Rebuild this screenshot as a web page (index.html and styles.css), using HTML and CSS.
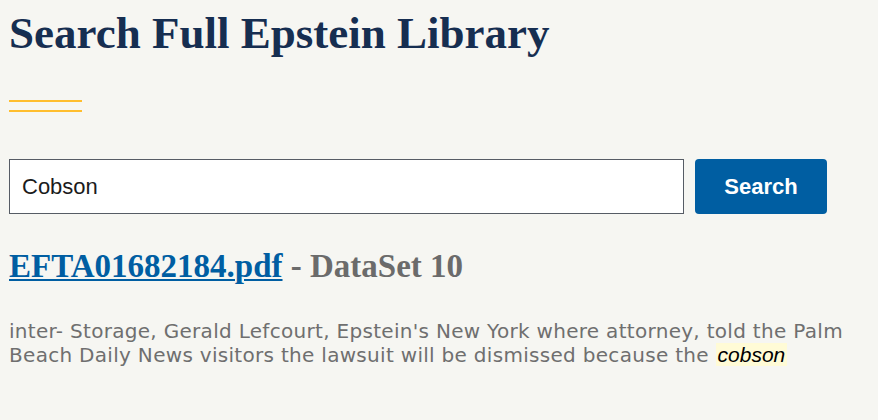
FILE: index.html
```html
<!DOCTYPE html>
<html lang="en">
<head>
<meta charset="utf-8">
<title>Search Full Epstein Library</title>
<link rel="stylesheet" href="styles.css">
</head>
<body>
<main class="page">
  <h1 class="title">Search Full Epstein Library</h1>
  <div class="rule"></div>
  <form class="search" onsubmit="return false">
    <input class="search-input" type="text" value="Cobson">
    <button class="search-btn" type="submit">Search</button>
  </form>
  <div class="result">
    <h2 class="result-title"><a class="result-link" href="#">EFTA01682184.pdf</a> - DataSet 10</h2>
    <p class="snippet">inter- Storage, Gerald Lefcourt, Epstein's New York where attorney, told the Palm Beach Daily News visitors the lawsuit will be dismissed because the <em class="hit">cobson</em></p>
  </div>
</main>
</body>
</html>
```
FILE: styles.css
```css
html, body {
  margin: 0;
  padding: 0;
  background: #f6f6f2;
}
.page {
  padding: 8px 9px 0 9px;
}
.title {
  margin: 0;
  font-family: "Liberation Serif", "Times New Roman", serif;
  font-weight: bold;
  font-size: 45px;
  line-height: 50px;
  color: #162e51;
}
.rule {
  width: 73px;
  height: 8px;
  border-top: 2px solid #ffbe2e;
  border-bottom: 2px solid #ffbe2e;
  margin-top: 42px;
}
.search {
  display: flex;
  gap: 11px;
  margin-top: 47px;
}
.search-input {
  box-sizing: border-box;
  width: 675px;
  height: 55px;
  margin: 0;
  padding: 0 12px;
  border: 1px solid #565c65;
  background: #fff;
  font-family: "Liberation Sans", Arial, sans-serif;
  font-size: 22px;
  color: #1b1b1b;
  border-radius: 0;
  outline: none;
}
.search-btn {
  box-sizing: border-box;
  width: 132px;
  height: 55px;
  margin: 0;
  border: 0;
  border-radius: 4px;
  background: #005ea2;
  color: #fff;
  font-family: "Liberation Sans", Arial, sans-serif;
  font-weight: bold;
  font-size: 22px;
}
.result {
  margin-top: 32px;
}
.result-title {
  margin: 0;
  font-family: "Liberation Serif", "Times New Roman", serif;
  font-weight: bold;
  font-size: 33px;
  line-height: 40px;
  color: #6b6b6b;
}
.result-link {
  color: #005ea2;
  text-decoration: underline;
  text-decoration-thickness: 2px;
  text-underline-offset: 2px;
}
.snippet {
  margin: 33px 0 0 0;
  font-family: "DejaVu Sans", sans-serif;
  font-size: 20px;
  line-height: 24px;
  letter-spacing: 0.3px;
  color: #6f6f6f;
}
.hit {
  background: #fffbd6;
  color: #000;
  font-family: "Liberation Sans", Arial, sans-serif;
  font-size: 21px;
  letter-spacing: 0;
  padding: 0 2px;
}
```
